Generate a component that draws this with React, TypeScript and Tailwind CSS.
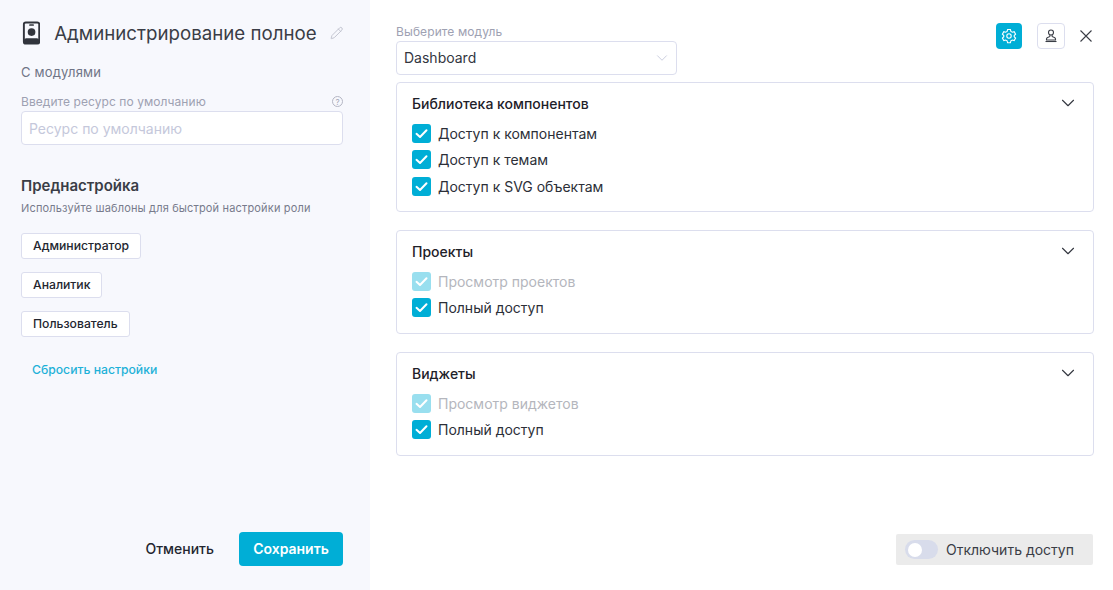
import { ChevronDown, Pencil } from "lucide-react";

function Check({ disabled, label }: { disabled?: boolean; label: string }) {
  return (
    <div className="flex h-[26.5px] items-center gap-[7px]">
      <span
        className={`flex h-[19px] w-[19px] items-center justify-center rounded-[3px] ${
          disabled ? "bg-[#99dfef]" : "bg-[#00aed6]"
        }`}
      >
        <svg width="19" height="19" viewBox="0 0 19 19" fill="none">
          <path d="M4.5 9.8 8 13 14.500 6.200" stroke="white" strokeWidth="2" strokeLinecap="round" strokeLinejoin="round" />
        </svg>
      </span>
      <span className={`text-[14px] ${disabled ? "text-[#b4b6bd]" : "text-[#2c2f38]"}`}>{label}</span>
    </div>
  );
}

function Group({ title, items, className }: { title: string; items: { label: string; disabled?: boolean }[]; className: string }) {
  return (
    <div className={`rounded-[4px] border border-[#dcdeee] px-[15px] pt-[8px] ${className}`}>
      <div className="flex h-[24px] items-center justify-between">
        <span className="text-[14px] font-medium text-[#1e2129]">{title}</span>
        <ChevronDown className="-mr-[1px] h-[22px] w-[22px] text-[#33363f]" strokeWidth={1.2} />
      </div>
      <div className="mt-[4.8px]">
        {items.map((item) => (
          <Check key={item.label} label={item.label} disabled={item.disabled} />
        ))}
      </div>
    </div>
  );
}

function PresetButton({ label, className }: { label: string; className: string }) {
  return (
    <button className={`flex h-[26px] w-fit items-center rounded-[3px] border border-[#dcdeee] bg-white px-[11px] text-[12.2px] font-medium text-[#23262f] ${className}`}>
      {label}
    </button>
  );
}

export default function App() {
  return (
    <div className="flex h-[590px] w-[1113px] overflow-hidden bg-white font-['Inter',sans-serif]">
      <aside className="flex w-[370px] shrink-0 flex-col bg-[#f7f8fd] pl-[21px] pr-[27px] pt-[21px]">
        <div className="flex h-[24px] items-center">
          <svg width="20" height="24" viewBox="0 0 20 24">
            <rect x="3" y="1" width="16" height="22" rx="2" fill="#f7f8fd" stroke="#31343c" strokeWidth="2" />
            <rect x="8.500" y="3" width="5" height="1.500" rx="0.700" fill="#31343c" />
            <circle cx="11" cy="11" r="4" fill="#31343c" />
            <path d="M3 23v-3c0-1.500 1-2.500 2.500-2.500h11c1.500 0 2.500 1 2.500 2.500v3z" fill="#31343c" />
          </svg>
          <span className="ml-[14px] mt-[1px] whitespace-nowrap text-[18.7px] leading-[24px] text-[#3a3d46]">Администрирование полное</span>
          <Pencil className="ml-[13px] h-[14px] w-[14px] text-[#b9bbc8]" strokeWidth={1.5} />
        </div>
        <div className="mt-[19px] text-[13px] leading-[17px] tracking-[0.2px] text-[#6f7486]">С модулями</div>
        <div className="mt-[13px] flex h-[15px] items-center justify-between">
          <span className="text-[12px] tracking-[0.07px] text-[#9ea1b2]">Введите ресурс по умолчанию</span>
          <span className="flex h-[11px] w-[11px] items-center justify-center rounded-full border border-[#b4b6c4] text-[8px] text-[#a5a7b6]">?</span>
        </div>
        <input
          placeholder="Ресурс по умолчанию"
          className="mt-[2px] h-[34px] rounded-[4px] border border-[#dcdeee] bg-white px-[7px] text-[14px] outline-none placeholder:text-[#c5c8db]"
        />
        <div className="mt-[30px] text-[15px] font-semibold leading-[22px] text-[#3a3d46]">Преднастройка</div>
        <div className="mt-[3px] text-[11px] leading-[16px] tracking-[0.16px] text-[#777b8c]">Используйте шаблоны для быстрой настройки роли</div>
        <PresetButton label="Администратор" className="mt-[17px]" />
        <PresetButton label="Аналитик" className="mt-[13px]" />
        <PresetButton label="Пользователь" className="mt-[13px]" />
        <a className="ml-[11px] mt-[24px] text-[12.2px] font-medium text-[#1eb1d8]">Сбросить настройки</a>
        <div className="mt-auto mb-[24px] flex items-center justify-end">
          <button className="mr-[25px] pb-[1px] text-[14px] font-medium text-[#23262f]">Отменить</button>
          <button className="h-[34px] w-[104px] rounded-[4px] bg-[#00aed6] pb-[1px] text-[14px] font-semibold text-white">Сохранить</button>
        </div>
      </aside>
      <main className="flex flex-1 flex-col pl-[26px] pr-[19px] pt-[23px]">
        <div className="flex items-start justify-between">
          <div className="w-[281px]">
            <div className="h-[18px] text-[12px] leading-[18px] tracking-[0.1px] text-[#9ea1b2]">Выберите модуль</div>
            <div className="flex h-[34px] items-center justify-between rounded-[4px] border border-[#dcdeee] pl-[7px] pr-[5px]">
              <span className="pb-[1px] text-[14px] text-[#33363f]">Dashboard</span>
              <ChevronDown className="h-[18px] w-[18px] text-[#c5c8db]" strokeWidth={1.2} />
            </div>
          </div>
          <div className="flex items-center">
            <button className="flex h-[26px] w-[26px] items-center justify-center rounded-[4px] bg-[#00aed6]">
              <svg width="16" height="16" viewBox="0 0 16 16" fill="none" stroke="white" strokeWidth="1.100">
                <path d="M6.600 1.500h2.800l.5 1.900 1.400.8 1.900-.5 1.400 2.400-1.400 1.400v1.200l1.400 1.400-1.400 2.400-1.900-.5-1.400.8-.5 1.900H6.600l-.5-1.900-1.400-.8-1.900.5-1.400-2.400 1.400-1.400V7.500L1.400 6.100l1.400-2.400 1.900.5 1.400-.8z" />
                <circle cx="8" cy="8" r="2.200" />
              </svg>
            </button>
            <button className="ml-[15px] flex h-[26px] w-[28px] items-center justify-center rounded-[4px] border border-[#dcdeee]">
              <svg width="14" height="14" viewBox="0 0 14 14" fill="none" stroke="#3a3d46" strokeWidth="1.100">
                <circle cx="7" cy="3.500" r="2.500" />
                <path d="M5.900 6v1.200c0 .8-3.400.9-3.400 2.600V11h9V9.800c0-1.700-3.400-1.800-3.400-2.600V6" />
                <path d="M1.500 12.500h11" />
              </svg>
            </button>
            <button className="ml-[13px] flex h-[16px] w-[16px] items-center justify-center">
              <svg width="12" height="12" viewBox="0 0 12 12" fill="none" stroke="#3a3d46" strokeWidth="1.100">
                <path d="M.5.500l11 11M11.500.500l-11 11" />
              </svg>
            </button>
          </div>
        </div>
        <div className="mt-[7px] flex flex-col gap-[18px]">
          <Group
            title="Библиотека компонентов"
            className="h-[130px]"
            items={[{ label: "Доступ к компонентам" }, { label: "Доступ к темам" }, { label: "Доступ к SVG объектам" }]}
          />
          <Group
            title="Проекты"
            className="h-[104px]"
            items={[{ label: "Просмотр проектов", disabled: true }, { label: "Полный доступ" }]}
          />
          <Group
            title="Виджеты"
            className="h-[104px]"
            items={[{ label: "Просмотр виджетов", disabled: true }, { label: "Полный доступ" }]}
          />
        </div>
        <div className="mt-auto mb-[25px] mr-[1px] flex h-[31px] w-[197px] items-center self-end rounded-[2px] bg-[#ebebeb] pl-[9px]">
          <span className="flex h-[19px] w-[33px] items-center rounded-full bg-[#d8dceb] pl-[3px]">
            <span className="h-[14px] w-[14px] rounded-full bg-white" />
          </span>
          <span className="ml-[8px] pb-[1px] text-[14px] text-[#3a3d46]">Отключить доступ</span>
        </div>
      </main>
    </div>
  );
}
